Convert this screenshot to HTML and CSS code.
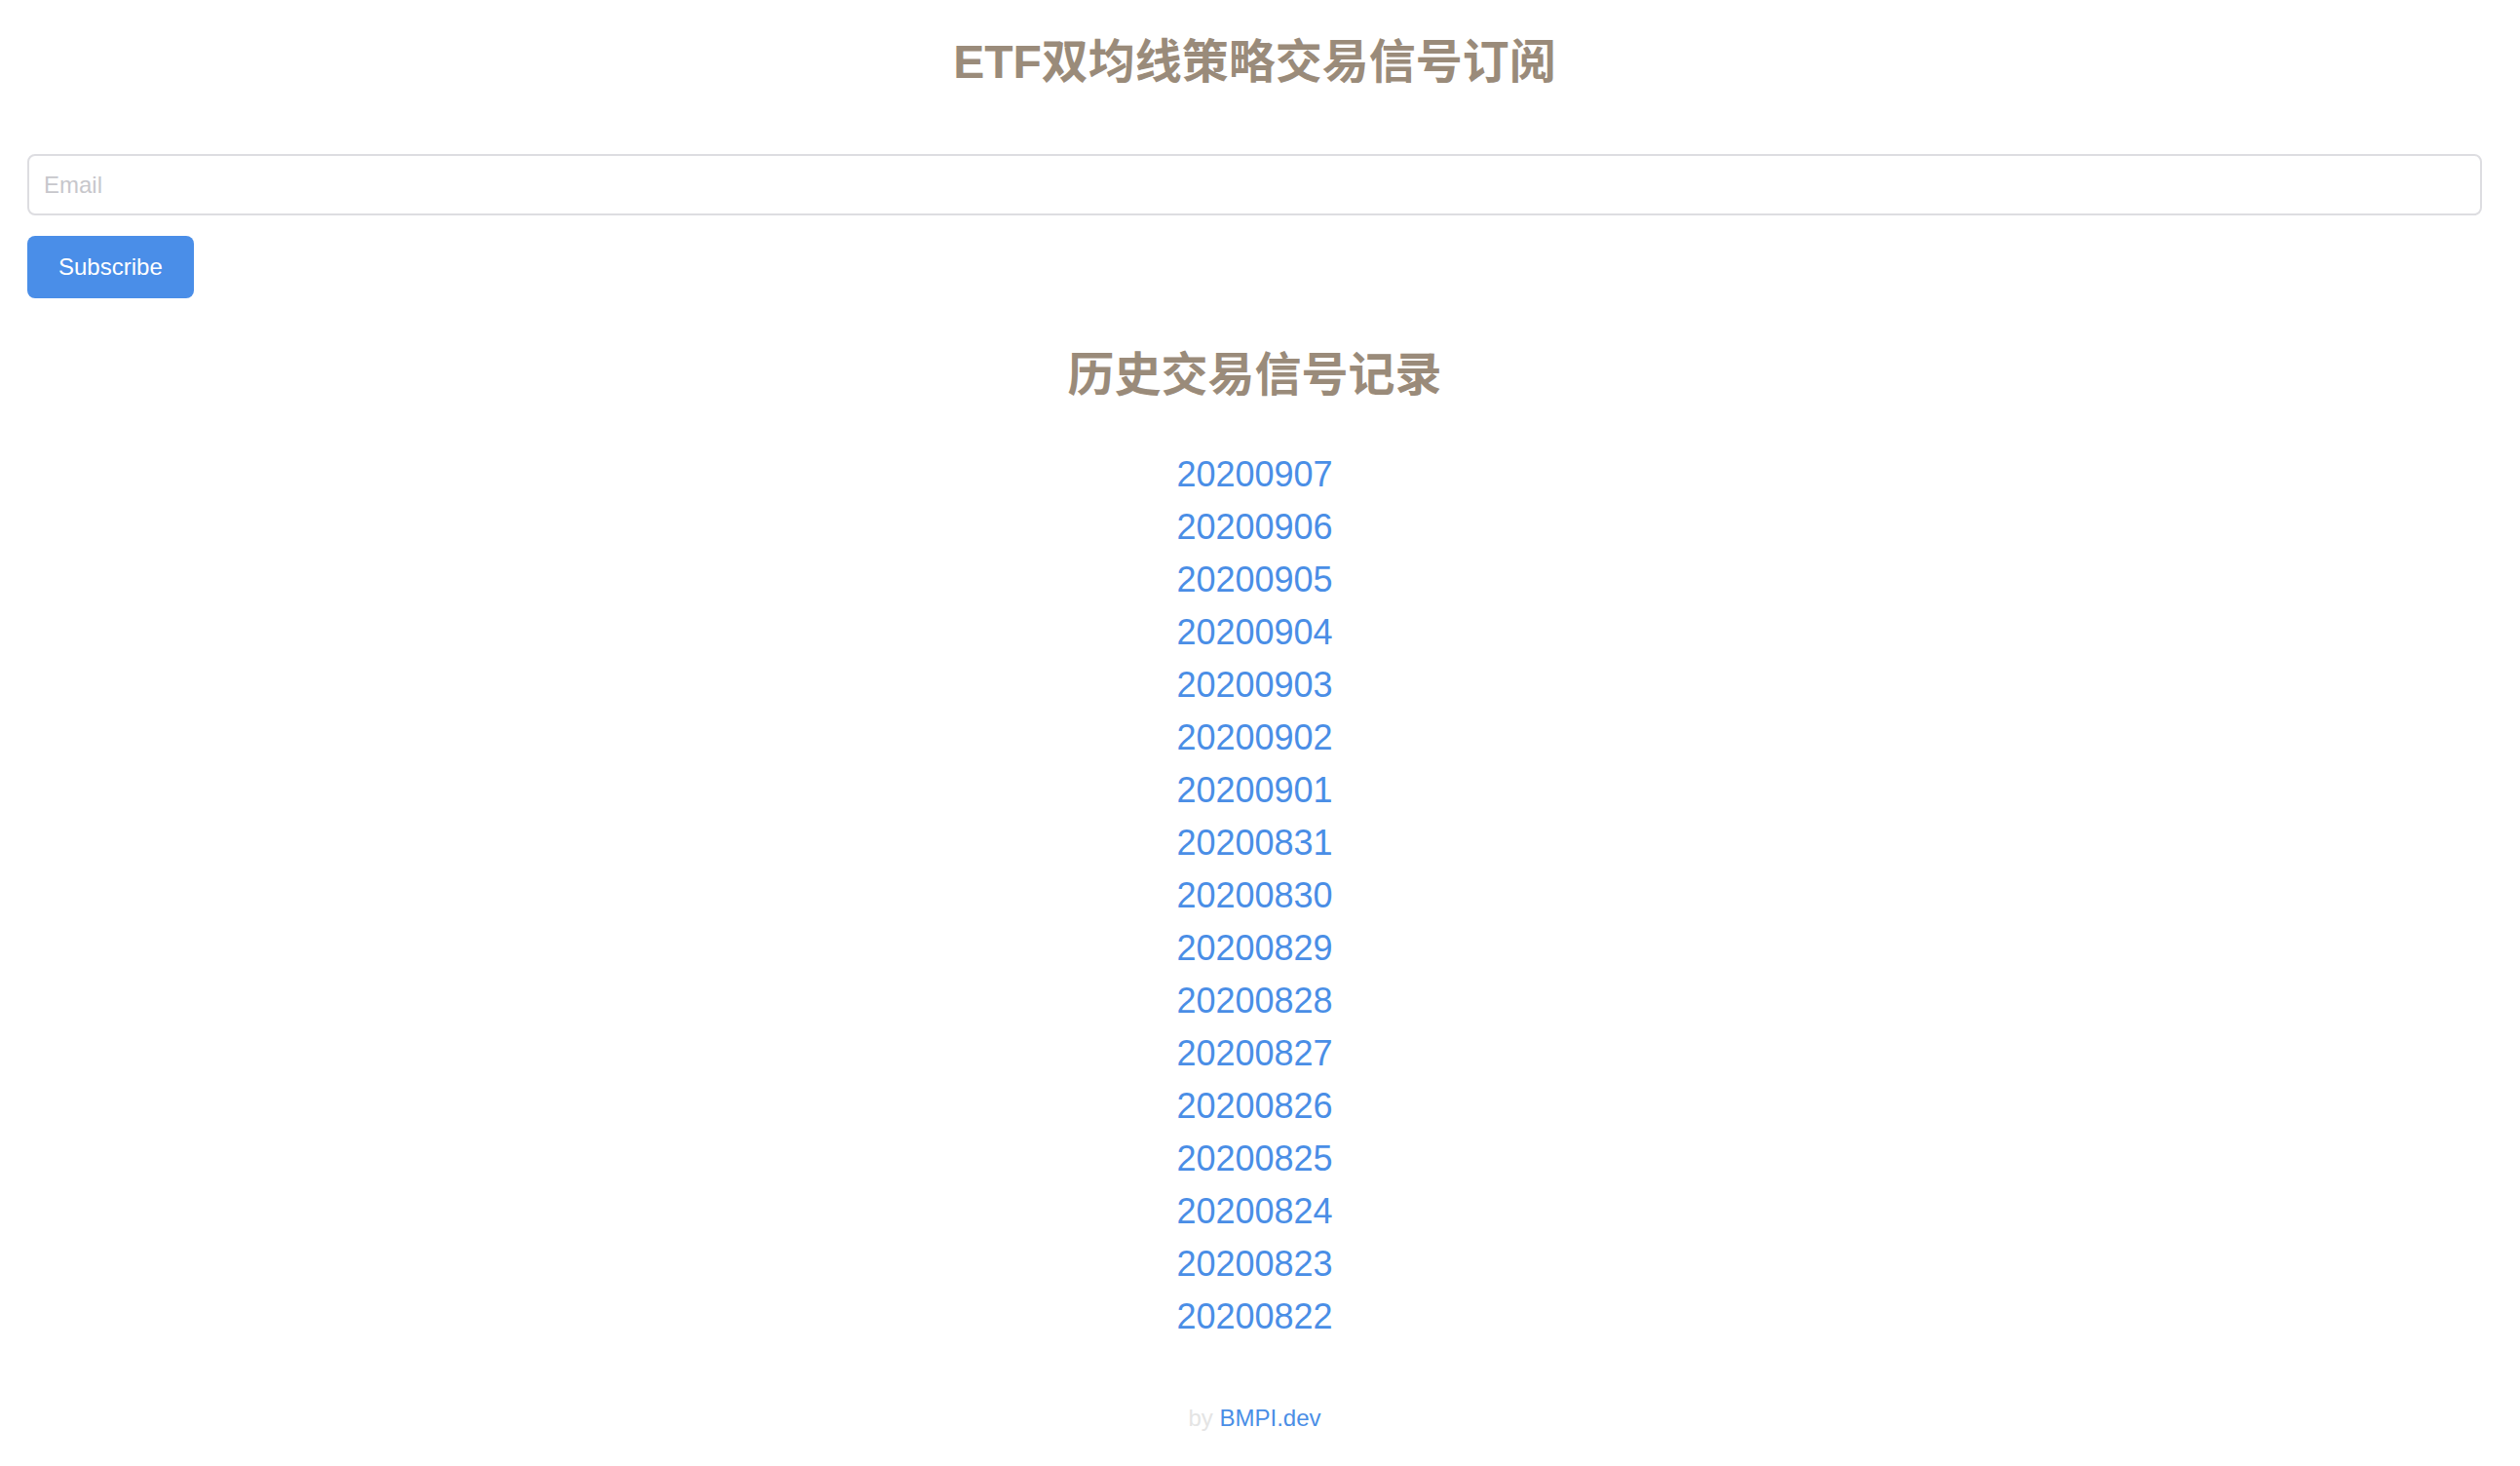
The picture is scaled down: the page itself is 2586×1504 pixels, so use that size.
FILE: index.html
```html
<!DOCTYPE html>
<html lang="zh-CN">
<head>
    <meta charset="UTF-8">
    <meta name="viewport" content="width=device-width, initial-scale=1.0">
    <title>ETF双均线策略交易信号订阅</title>
    <link rel="stylesheet" href="styles.css">
</head>
<body>

<div class="page">
    <h1 class="title">ETF双均线策略交易信号订阅</h1>

    <form class="subscribe">
        <input type="email" class="email" placeholder="Email">
        <button type="submit" class="btn">Subscribe</button>
    </form>

    <h2 class="title history-title">历史交易信号记录</h2>

    <ul class="history">
        <li><a href="#">20200907</a></li>
        <li><a href="#">20200906</a></li>
        <li><a href="#">20200905</a></li>
        <li><a href="#">20200904</a></li>
        <li><a href="#">20200903</a></li>
        <li><a href="#">20200902</a></li>
        <li><a href="#">20200901</a></li>
        <li><a href="#">20200831</a></li>
        <li><a href="#">20200830</a></li>
        <li><a href="#">20200829</a></li>
        <li><a href="#">20200828</a></li>
        <li><a href="#">20200827</a></li>
        <li><a href="#">20200826</a></li>
        <li><a href="#">20200825</a></li>
        <li><a href="#">20200824</a></li>
        <li><a href="#">20200823</a></li>
        <li><a href="#">20200822</a></li>
    </ul>

    <footer class="footer">
        <span class="by">by</span> <a href="#">BMPI.dev</a>
    </footer>
</div>

</body>
</html>
```

FILE: styles.css
```css
body {
    margin: 0;
    background: #fff;
    font-family: "Liberation Sans", "Noto Sans CJK SC", sans-serif;
}
a {
    color: #4a8ee6;
    text-decoration: none;
}
.page {
    padding: 35px 39px 0 28px;
}
.title {
    margin: 0;
    font-size: 48px;
    line-height: 58px;
    font-weight: bold;
    text-align: center;
    color: #9a8b7a;
}
.subscribe {
    margin: 65px 0 0;
}
.email {
    display: block;
    width: 100%;
    height: 63px;
    box-sizing: border-box;
    padding: 0 15px;
    border: 2px solid #dddde1;
    border-radius: 8px;
    font-family: inherit;
    font-size: 24px;
    color: #333;
    outline: none;
}
.email::placeholder {
    color: #c7c7cc;
}
.btn {
    display: block;
    margin-top: 21px;
    height: 64px;
    padding: 0 32px;
    border: none;
    border-radius: 8px;
    background-color: #4a8ee8;
    color: #fff;
    font-family: inherit;
    font-size: 24px;
    cursor: pointer;
}
.history-title {
    margin-top: 50px;
}
.history {
    list-style: none;
    margin: 46px 0 0;
    padding: 0;
    text-align: center;
}
.history li {
    font-size: 36px;
    line-height: 54px;
}
.footer {
    margin-top: 59px;
    padding-bottom: 30px;
    text-align: center;
    font-size: 24px;
    line-height: 36px;
}
.by {
    color: #e4e4e4;
}
```
